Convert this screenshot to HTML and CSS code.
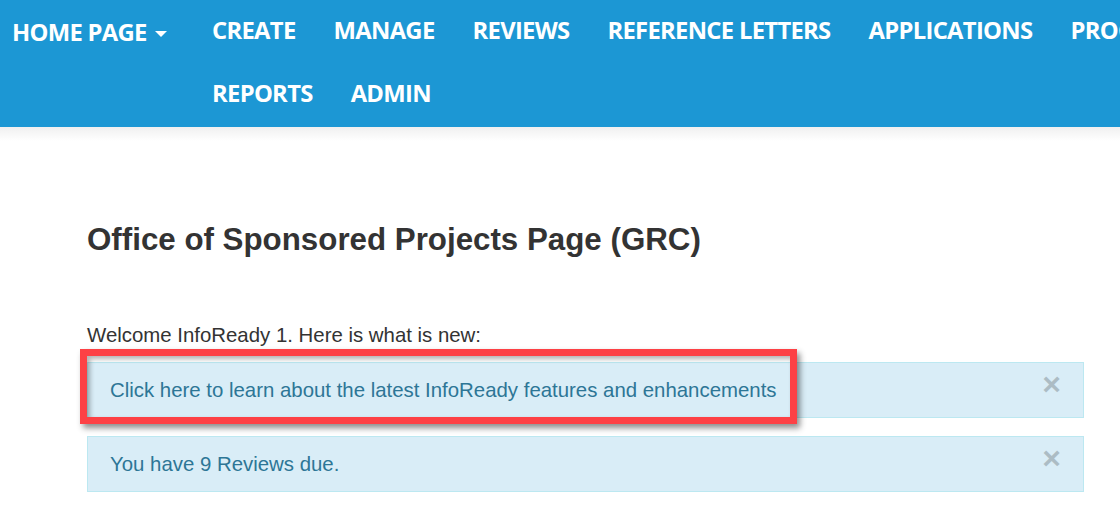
FILE: index.html
```html
<!DOCTYPE html>
<html>
<head>
<meta charset="utf-8">
<link rel="stylesheet" href="styles.css">
</head>
<body>
<header class="navbar">
  <a class="brand" href="#">HOME PAGE <span class="caret"></span></a>
  <ul class="menu">
    <li><a href="#">CREATE</a></li>
    <li><a href="#">MANAGE</a></li>
    <li><a href="#">REVIEWS</a></li>
    <li><a href="#">REFERENCE LETTERS</a></li>
    <li><a href="#">APPLICATIONS</a></li>
    <li><a href="#">PROGRAMS</a></li>
    <li><a href="#">REPORTS</a></li>
    <li><a href="#">ADMIN</a></li>
  </ul>
</header>
<div class="shade"></div>
<main class="content">
  <h1 class="title">Office of Sponsored Projects Page (GRC)</h1>
  <p class="welcome">Welcome InfoReady 1. Here is what is new:</p>
  <div class="alert highlighted">
    <a class="alert-link" href="#">Click here to learn about the latest InfoReady features and enhancements</a>
    <span class="close">&times;</span>
    <div class="marker"></div>
  </div>
  <div class="alert">
    <span class="alert-text">You have 9 Reviews due.</span>
    <span class="close">&times;</span>
  </div>
</main>
</body>
</html>
```
FILE: styles.css
```css
html, body {
  margin: 0;
  padding: 0;
  background: #ffffff;
  overflow: hidden;
  width: 1120px;
  height: 531px;
}
body {
  font-family: "Liberation Sans", Arial, sans-serif;
  color: #333333;
}
.navbar {
  background: #1c97d4;
  height: 127px;
  display: flex;
  align-items: flex-start;
  width: 1120px;
  overflow: hidden;
}
.brand {
  flex: none;
  color: #ffffff;
  text-decoration: none;
  font-family: "Open Sans", sans-serif;
  font-weight: 700;
  font-size: 23.8px;
  letter-spacing: -0.7px;
  padding: 17px 0 0 12px;
  width: 181px;
  line-height: 30px;
  white-space: nowrap;
}
.caret {
  display: inline-block;
  width: 0;
  height: 0;
  border-left: 6px solid transparent;
  border-right: 6px solid transparent;
  border-top: 6px solid #ffffff;
  vertical-align: middle;
  margin-left: 3px;
  position: relative;
  top: -1px;
}
.menu {
  flex: none;
  list-style: none;
  margin: 0;
  padding: 0;
  display: flex;
  flex-wrap: wrap;
  width: 1050px;
}
.menu li a {
  display: block;
  color: #ffffff;
  text-decoration: none;
  font-family: "Open Sans", sans-serif;
  font-weight: 700;
  font-size: 23.8px;
  letter-spacing: -0.7px;
  padding: 15px 19px 18px;
  line-height: 30px;
  white-space: nowrap;
}
.shade {
  height: 14px;
  background: linear-gradient(#f0f0f0, #ffffff);
}
.content {
  padding: 0 36px 0 87px;
}
.title {
  margin: 81px 0 0;
  font-size: 31.3px;
  font-weight: 700;
  line-height: 36px;
  color: #333333;
}
.welcome {
  margin: 64px 0 0;
  font-size: 20.4px;
  line-height: 26px;
}
.alert {
  position: relative;
  background: #d9edf7;
  border: 1px solid #bce8f1;
  color: #31708f;
  font-size: 20.4px;
  line-height: 26px;
  padding: 14px 22px;
  height: 26px;
}
.highlighted {
  margin-top: 14px;
}
.alert + .alert {
  margin-top: 18px;
}
.alert-link, .alert-text {
  color: #2d7696;
  text-decoration: none;
}
.close {
  position: absolute;
  right: 22px;
  top: 5px;
  font-size: 32px;
  font-weight: 700;
  color: #000000;
  opacity: 0.2;
  line-height: 32px;
}
.marker {
  position: absolute;
  left: -8px;
  top: -14px;
  width: 703px;
  height: 61px;
  border: 7px solid #fd4145;
  box-shadow: 3px 4px 6px rgba(0, 0, 0, 0.45), inset 3px 3px 5px rgba(0, 0, 0, 0.3);
  pointer-events: none;
}
```
